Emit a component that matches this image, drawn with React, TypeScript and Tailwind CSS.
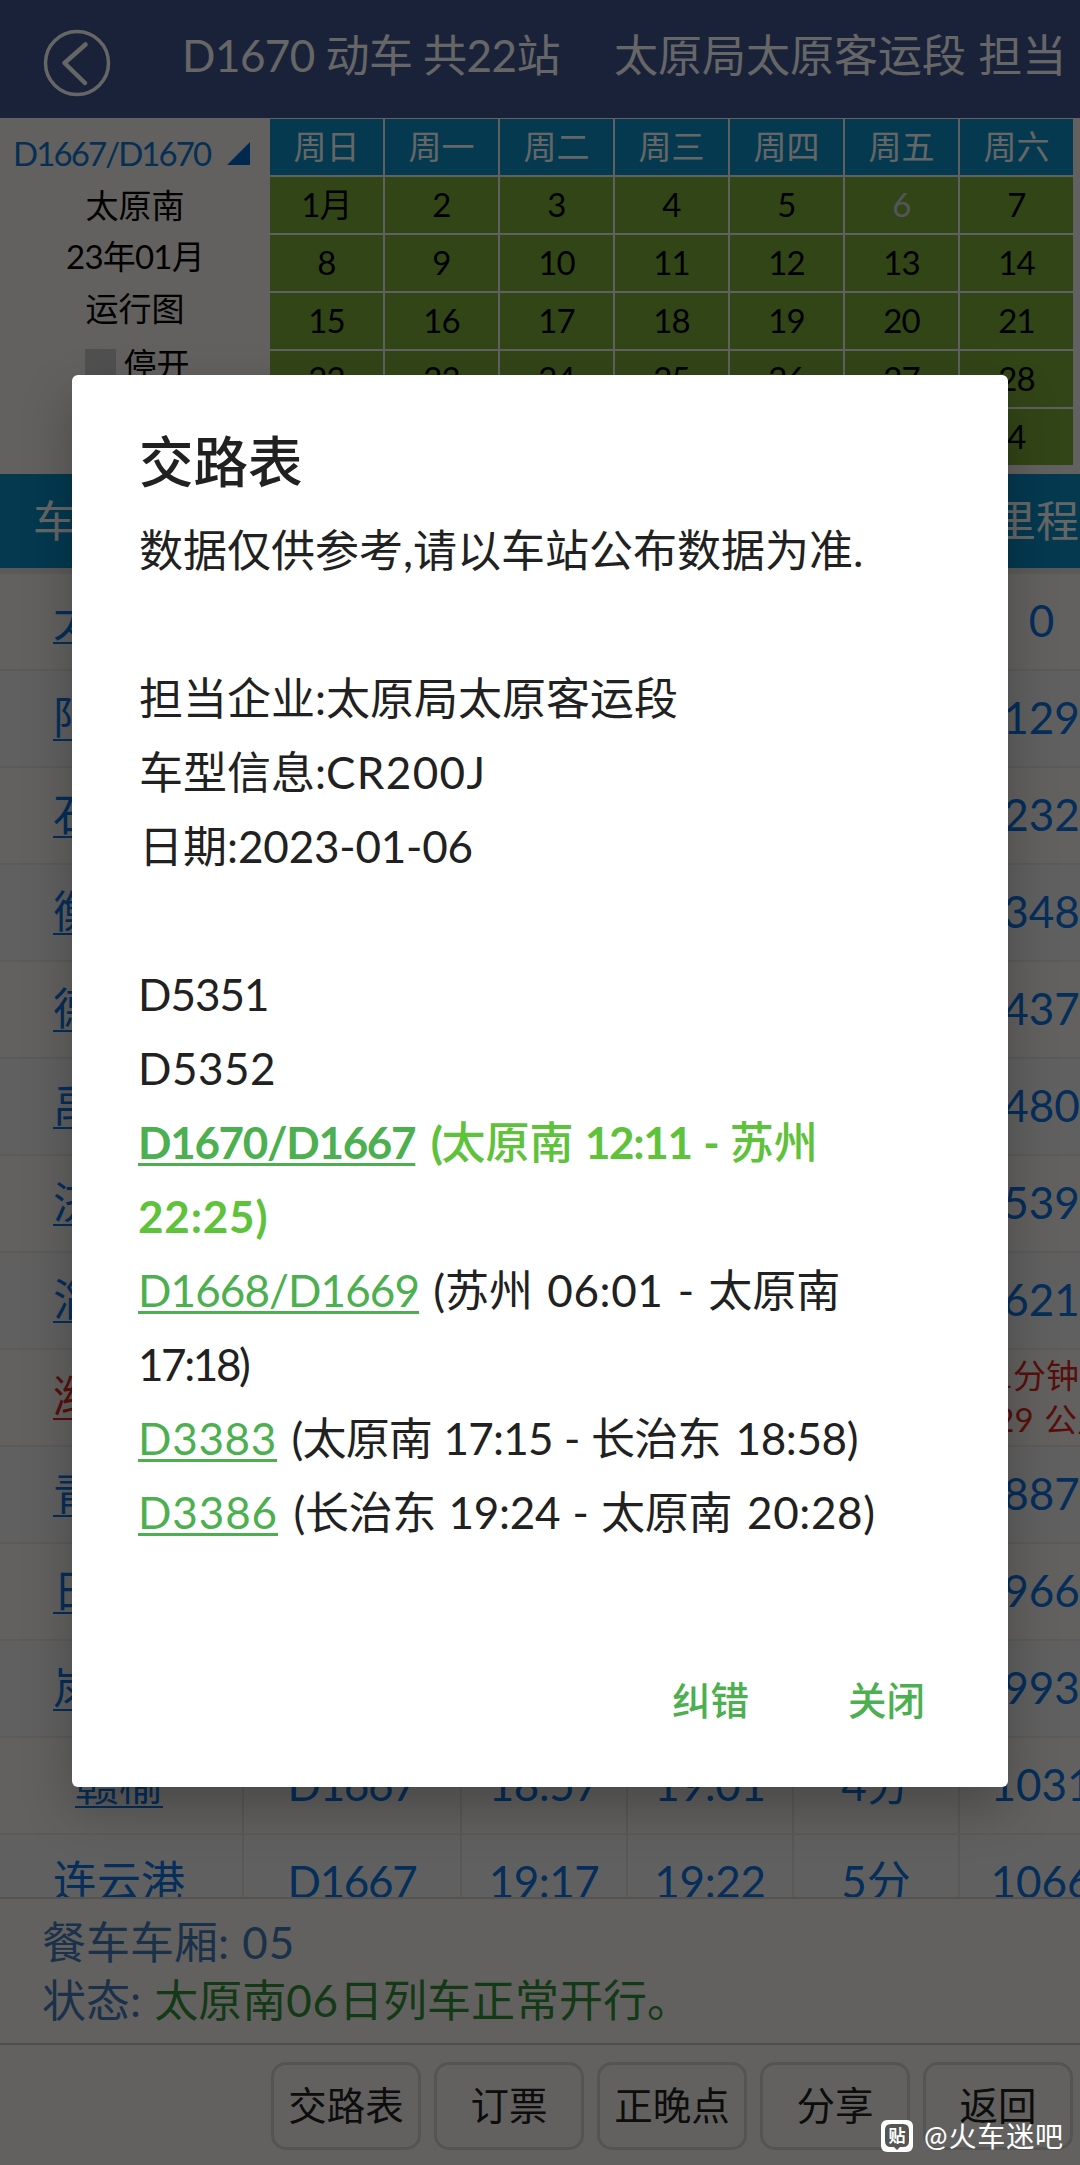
import React from "react";

const weekdays = ["周日", "周一", "周二", "周三", "周四", "周五", "周六"];
const days = [
  "1月", "2", "3", "4", "5", "6", "7",
  "8", "9", "10", "11", "12", "13", "14",
  "15", "16", "17", "18", "19", "20", "21",
  "22", "23", "24", "25", "26", "27", "28",
  "29", "30", "31", "1", "2", "3", "4",
];

type Stop = { name: string; train: string; arrive: string; depart: string; stay: string; km: string };

const stops: Stop[] = [
  { name: "太原南", train: "D1670", arrive: "", depart: "12:11", stay: "", km: "0" },
  { name: "阳泉北", train: "D1670", arrive: "", depart: "", stay: "", km: "129" },
  { name: "石家庄", train: "D1670", arrive: "", depart: "", stay: "", km: "232" },
  { name: "衡水北", train: "D1667", arrive: "", depart: "", stay: "", km: "348" },
  { name: "德州东", train: "D1667", arrive: "", depart: "", stay: "", km: "437" },
  { name: "禹城东", train: "D1667", arrive: "", depart: "", stay: "", km: "480" },
  { name: "济南东", train: "D1667", arrive: "", depart: "", stay: "", km: "539" },
  { name: "淄博北", train: "D1667", arrive: "", depart: "", stay: "", km: "621" },
  { name: "潍坊北", train: "D1667", arrive: "", depart: "", stay: "", km: "" },
  { name: "青岛北", train: "D1667", arrive: "", depart: "", stay: "", km: "887" },
  { name: "日照西", train: "D1667", arrive: "", depart: "", stay: "", km: "966" },
  { name: "岚山西", train: "D1667", arrive: "", depart: "", stay: "", km: "993" },
  { name: "赣榆", train: "D1667", arrive: "18:57", depart: "19:01", stay: "4分", km: "1031" },
  { name: "连云港", train: "D1667", arrive: "19:17", depart: "19:22", stay: "5分", km: "1066" },
];

const actions = ["交路表", "订票", "正晚点", "分享", "返回"];

function TopBar() {
  return (
    <header className="flex h-[118px] shrink-0 items-start bg-[#41558f] text-white">
      <svg className="ml-[43px] mt-[29px] h-[68px] w-[68px] shrink-0" viewBox="0 0 68 68" fill="none" stroke="currentColor">
        <circle cx="34" cy="34" r="31.5" strokeWidth="3.5" />
        <path d="M42.5 15.5 21.5 34l20.5 20" strokeWidth="4.5" strokeLinecap="round" strokeLinejoin="round" />
      </svg>
      <h1 className="ml-[71px] mt-[22px] flex whitespace-nowrap text-[44px] leading-[66px]">
        <span className="w-[432px] tracking-[-0.55px]">D1670 动车 共22站</span>
        <span className="[word-spacing:1px]">太原局太原客运段 担当</span>
      </h1>
    </header>
  );
}

function Calendar() {
  return (
    <section className="flex h-[356px] shrink-0">
      <div className="flex w-[270px] shrink-0 flex-col items-center pt-[10px] text-[33px] leading-[51.5px] text-black">
        <div className="flex w-full items-center pl-[13px] text-[#1077cf]">
          <span className="w-[214px] whitespace-nowrap tracking-[-1.9px]">D1667/D1670</span>
          <svg className="h-[23px] w-[23px]" viewBox="0 0 23 23" fill="#0068c6">
            <path d="M23 0v23H0z" />
          </svg>
        </div>
        <div>太原南</div>
        <div className="tracking-[-0.8px]">23年01月</div>
        <div>运行图</div>
        <div className="mt-[5px] flex items-center gap-2 pl-1">
          <span className="h-[31px] w-[31px] bg-[#c8c8c8]" />
          停开
        </div>
      </div>
      <div className="mt-px grid h-[346px] w-[803px] grid-cols-7 grid-rows-6 gap-[2px] bg-[#efefef] text-center text-[33px] leading-[54px]">
        {weekdays.map((d) => (
          <div key={d} className="bg-[#0a8fc9] text-white">{d}</div>
        ))}
        {days.map((d, i) => (
          <div key={i} className={(i === 5 ? "text-gray-300 " : "text-black ") + "bg-[#7eac3a] tracking-[-0.8px]"}>{d}</div>
        ))}
      </div>
    </section>
  );
}

function StopRow({ stop, index }: { stop: Stop; index: number }) {
  const red = stop.name === "潍坊北";
  return (
    <div
      className={
        (index % 2 ? "bg-[#f2eff1] " : "bg-[#f5f3ef] ") +
        (red ? "text-[#d82a20] " : "text-[#0e74e0] ") +
        "grid h-[97px] shrink-0 grid-cols-[242px_218px_166px_166px_166px_165px] border-t-2 border-[#e6e4e2] text-center text-[44px] leading-[93px]"
      }
    >
      <div className="pr-1">
        <span className="underline decoration-2 underline-offset-[5px]">{stop.name}</span>
      </div>
      <div className="border-l-2 border-[#e0dedc] tracking-[-1.3px]">{stop.train}</div>
      <div className="border-l-2 border-[#e0dedc] tracking-[-0.5px]">{stop.arrive}</div>
      <div className="border-l-2 border-[#e0dedc] tracking-[-0.3px]">{stop.depart}</div>
      <div className="border-l-2 border-[#e0dedc]">{stop.stay}</div>
      {red ? (
        <div className="ml-[-40px] pt-[3px] text-right text-[33px] leading-[44px]">
          <div className="pr-[44px]">晚点1分钟</div>
          <div className="pr-[13px] [word-spacing:2px]">729 公里</div>
        </div>
      ) : (
        <div className="border-l-2 border-[#e0dedc]">{stop.km}</div>
      )}
    </div>
  );
}

function Timetable() {
  return (
    <section className="flex h-[1423px] shrink-0 flex-col overflow-hidden">
      <div className="flex h-[94px] shrink-0 items-center justify-between bg-[#0a8fc9] pl-[33px] pr-px text-[43px] text-white">
        <span>车站</span>
        <span>里程</span>
      </div>
      <div className="h-1 shrink-0 bg-[#e3e1dd]" />
      {stops.map((s, i) => (
        <StopRow key={s.name} stop={s} index={i} />
      ))}
    </section>
  );
}

function Status() {
  return (
    <section className="h-[146px] shrink-0 border-t-2 border-[#d2d0cc] pl-[42px] pt-[14px] text-[44px] leading-[58px] text-[#447cba]">
      <p>
        餐车车厢: <span className="pl-[2px] tracking-[1px]">05</span>
      </p>
      <p>
        状态:{" "}
        <span className="pl-[2px] text-[#32903a]">
          太原南<span className="tracking-[0.8px]">06</span>日列车正常开行。
        </span>
      </p>
    </section>
  );
}

function BottomBar() {
  return (
    <nav className="flex h-[122px] shrink-0 items-start justify-end gap-[13px] border-t-2 border-[#c4c2be] pr-[7px] pt-[17px]">
      {actions.map((a) => (
        <button key={a} className="h-[88px] w-[150px] rounded-[15px] border-[3px] border-[#d2d1cf] text-[38.5px] text-[#222]">
          {a}
        </button>
      ))}
    </nav>
  );
}

function Link({ className, children }: { className: string; children: React.ReactNode }) {
  return (
    <span
      className={
        className + " text-[#4caf50] underline decoration-[2.5px] underline-offset-[4px] [text-decoration-skip-ink:none]"
      }
    >
      {children}
    </span>
  );
}

function Cjk({ children }: { children: React.ReactNode }) {
  return <span className="font-medium tracking-normal">{children}</span>;
}

function RouteDialog() {
  return (
    <div className="absolute left-[72px] top-[375px] flex h-[1412px] w-[936px] flex-col rounded-md bg-white pl-[67px] text-[#212121] shadow-[0_22px_50px_rgba(0,0,0,0.25)]">
      <h2 className="mt-[49px] text-[54.5px] font-medium leading-[74px]">交路表</h2>
      <div className="mt-[15px] whitespace-pre text-[44px] leading-[74px]">
        <p>数据仅供参考,请以车站公布数据为准.</p>
        <br />
        <p>担当企业:太原局太原客运段</p>
        <p>
          车型信息:<span className="tracking-[1.4px]">CR200J</span>
        </p>
        <p>
          日期:<span className="tracking-[-0.2px]">2023-01-06</span>
        </p>
        <br />
        <p className="ml-[-1px] tracking-[-1px]">D5351</p>
        <p className="ml-[-1px] tracking-[0.5px]">D5352</p>
        <p className="ml-[-1px] font-bold text-[#5ec23a]">
          <Link className="tracking-[-1.3px]">D1670/D1667</Link>
          <span className="ml-[4px] tracking-[-1.3px] [word-spacing:2px]">
            {" "}(<Cjk>太原南</Cjk> 12:11 - <Cjk>苏州</Cjk>{"\n"}
          </span>
          <span className="tracking-[0.8px]">22:25)</span>
        </p>
        <p className="ml-[-1px]">
          <Link className="tracking-[-0.9px]">D1668/D1669</Link>
          <span className="[word-spacing:3px]">
            {" "}(苏州 <span className="tracking-[0.6px]">06:01</span> - 太原南{"\n"}
          </span>
          <span className="tracking-[-2.4px]">17:18)</span>
        </p>
        <p className="ml-[-1px]">
          <Link className="tracking-[0.7px]">D3383</Link>
          <span className="ml-[3px] tracking-[-0.8px] [word-spacing:1px]"> (太原南 17:15 - 长治东</span>
          <span className="ml-[4px] tracking-[-0.4px]"> 18:58)</span>
        </p>
        <p className="ml-[-1px]">
          <Link className="tracking-[0.9px]">D3386</Link>
          <span className="ml-[3px] tracking-[-0.3px] [word-spacing:1.5px]"> (长治东 19:24 - 太原南</span>
          <span className="ml-[3px] tracking-[0.6px]"> 20:28)</span>
        </p>
      </div>
      <div className="mt-[121px] flex justify-end gap-[99px] pr-[83px] text-[38.5px] font-medium leading-[60px] text-[#4caf50]">
        <button>纠错</button>
        <button>关闭</button>
      </div>
    </div>
  );
}

function Watermark() {
  return (
    <div className="absolute bottom-[9px] right-[16px] flex items-center gap-[11px] text-[28px] leading-[40px] text-white">
      <svg className="h-8 w-8" viewBox="0 0 32 32">
        <rect width="32" height="32" rx="6" fill="#fff" />
        <path d="M10 4h12q6 0 6 6v11q0 6-6 6h-3l-3 3-3-3h-3q-6 0-6-6V10q0-6 6-6z" fill="#555" />
        <text x="16" y="21.5" textAnchor="middle" fontSize="17" fontWeight="700" fill="#fff">贴</text>
      </svg>
      <span className="tracking-[0.9px]">@火车迷吧</span>
    </div>
  );
}

export default function App() {
  return (
    <div className="relative h-[2165px] w-[1080px] overflow-hidden bg-[#f5f3ee] font-[Lato,'Noto_Sans_CJK_SC',sans-serif]">
      <div className="flex h-full flex-col">
        <TopBar />
        <Calendar />
        <Timetable />
        <Status />
        <BottomBar />
      </div>
      <div className="absolute inset-0 bg-black/60" />
      <RouteDialog />
      <Watermark />
    </div>
  );
}
